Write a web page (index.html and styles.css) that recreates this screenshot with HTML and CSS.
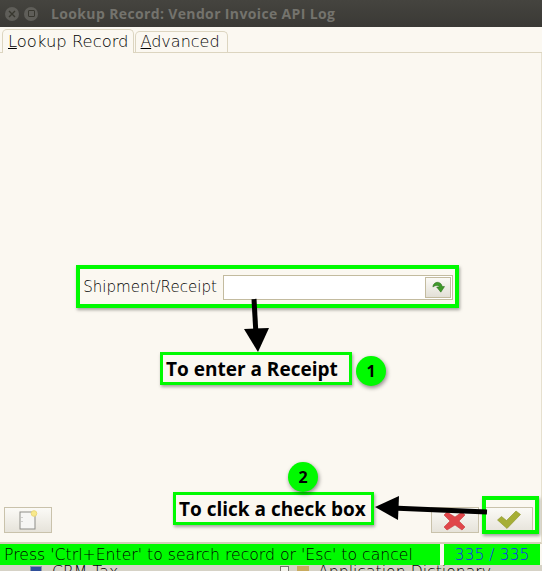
FILE: index.html
```html
<!doctype html>
<html lang="en">
    <head>
        <meta charset="UTF-8" />
        <title>Lookup Record: Vendor Invoice API Log</title>
        <link rel="stylesheet" href="styles.css">
    </head>

    <body>
        <div class="titlebar">
            <span class="win-btn">
                <svg width="8" height="8" viewBox="0 0 8 8"><path d="M1 1l6 6M7 1L1 7" stroke="#38372f" stroke-width="1.4" /></svg>
            </span>
            <span class="win-btn"><span class="win-square"></span></span>
            <span class="win-title">Lookup Record: Vendor Invoice API Log</span>
        </div>

        <div class="tabs">
            <div class="tab tab-active"><u>L</u>ookup Record</div>
            <div class="tab"><u>A</u>dvanced</div>
        </div>

        <div class="panel">
            <div class="form-area">
                <div class="form-row">
                    <label class="field-label" for="receipt">Shipment/Receipt</label>
                    <div class="field">
                        <input type="text" id="receipt" />
                        <button class="field-btn">
                            <svg width="13" height="13" viewBox="0 0 14 14">
                                <path d="M1 6.500C1 3 4 1 7 1.500c2 .4 3.500 2 4 4.500H13.500L9.500 12 5 6.500h3C7.500 4.500 4 4 1 6.500z" fill="#3f9a2b" stroke="#2c6f1c" stroke-width=".6" />
                            </svg>
                        </button>
                    </div>
                </div>
            </div>

            <div class="actions">
                <button class="btn btn-new">
                    <svg width="20" height="20" viewBox="0 0 20 20">
                        <rect x="2" y="2" width="15" height="17" fill="#f6f6f4" stroke="#8d8d88" />
                        <path d="M4 7v.8M4 11v.8" stroke="#9a9a96" />
                        <circle cx="16" cy="3.500" r="2.800" fill="#f8e98c" stroke="#ecd978" />
                    </svg>
                </button>
                <div class="actions-right">
                    <button class="btn">
                        <svg width="26" height="22" viewBox="0 0 26 22">
                            <path d="M5 3l8 5 7-5 3 3-6 6 6 6-3 3-7-5-8 5-3-3 6-6-6-6z" fill="#e0464a" stroke="#c53a3c" stroke-width=".6" />
                        </svg>
                    </button>
                    <button class="btn">
                        <svg width="26" height="22" viewBox="0 0 26 22">
                            <path d="M1.500 11l4-3.500 5 4L20 2l4.500 3.500L11 19.500z" fill="#a6ae35" stroke="#8b9329" stroke-width=".6" />
                        </svg>
                    </button>
                </div>
            </div>

            <div class="mark mark-form"></div>
            <div class="mark mark-ok"></div>
            <div class="note note-receipt">To enter a Receipt</div>
            <div class="note note-check">To click a check box</div>
            <div class="step step-one">1</div>
            <div class="step step-two">2</div>

            <svg class="arrow arrow-down" width="30" height="60" viewBox="0 0 30 60">
                <path d="M12 2l2 36" stroke="#000" stroke-width="5" fill="none" />
                <path d="M2 32l25 -1-11 24z" fill="#000" />
            </svg>
            <svg class="arrow arrow-left" width="116" height="30" viewBox="0 0 116 30">
                <path d="M18 13l95 4" stroke="#000" stroke-width="5" fill="none" />
                <path d="M1 12l24-11-1 24z" fill="#000" />
            </svg>
        </div>

        <div class="statusbar">
            <div class="status-msg">Press 'Ctrl+Enter' to search record or 'Esc' to cancel</div>
            <div class="status-count">335 / 335</div>
        </div>

        <div class="behind">
            <span class="tree-check"></span>
            <span class="behind-left">CRM Tax</span>
            <span class="tree-plus"></span>
            <span class="tree-folder"></span>
            <span class="behind-right">Application Dictionary</span>
        </div>
    </body>
</html>
```

FILE: styles.css
```css
* {
    box-sizing: border-box;
    margin: 0;
    padding: 0;
}

html,
body {
    height: 100%;
    overflow: hidden;
}

body {
    display: flex;
    flex-direction: column;
    background: #fbf8f1;
    color: #000;
    font-family: "DejaVu Sans", sans-serif;
    font-weight: 200;
}

.titlebar {
    display: flex;
    align-items: center;
    flex: none;
    height: 27px;
    padding-left: 5px;
    gap: 5px;
    background: linear-gradient(#45443f, #3a3935);
}

.win-btn {
    display: flex;
    align-items: center;
    justify-content: center;
    width: 14px;
    height: 14px;
    border-radius: 50%;
    background: #5f5e59;
}

.win-square {
    width: 7px;
    height: 7px;
    border: 1px solid #38372f;
    border-radius: 1px;
}

.win-title {
    margin-left: 8px;
    color: #74736d;
    font-family: "Open Sans", sans-serif;
    font-size: 14px;
    font-weight: 700;
    letter-spacing: 0.36px;
}

.tabs {
    display: flex;
    flex: none;
    align-items: flex-end;
    height: 26px;
    padding-left: 2px;
    border-bottom: 1px solid #dcd5c0;
}

.tab {
    height: 21px;
    margin-left: 1px;
    padding: 0 7px 0 5px;
    border: 1px solid #dcd5c0;
    border-bottom: none;
    border-radius: 5px 5px 0 0;
    font-size: 16px;
    line-height: 20px;
}

.tab-active {
    height: 24px;
    margin-left: 0;
    margin-bottom: -1px;
    padding: 0 4px 0 5px;
    line-height: 23px;
    font-size: 16.400px;
    background: #fbf8f1;
}

.panel {
    position: relative;
    display: flex;
    flex-direction: column;
    flex: 1;
    min-height: 0;
    border-bottom: 2px solid #d6cfba;
    border-right: 1px solid #e6e0cf;
}

.form-area {
    display: flex;
    flex: 1;
    align-items: center;
    justify-content: flex-end;
    padding: 14px 88px 0 0;
}

.form-row {
    display: flex;
    align-items: center;
    gap: 6px;
}

.field-label {
    font-size: 15.100px;
}

.field {
    display: flex;
    align-items: center;
    width: 230px;
    height: 25px;
    padding-right: 1px;
    background: white;
    border: 1px solid #c3bb9f;
}

.field input {
    flex: 1;
    min-width: 0;
    height: 100%;
    border: none;
    background: transparent;
}

.field-btn {
    display: flex;
    align-items: center;
    justify-content: center;
    width: 26px;
    height: 21px;
    border: 1px solid #c3bb9f;
    background: linear-gradient(#fbfaf6, #e2dfd6);
}

.actions {
    display: flex;
    flex: none;
    justify-content: space-between;
    padding: 0 8px 9px 4px;
}

.actions-right {
    display: flex;
    gap: 6px;
}

.btn {
    display: flex;
    align-items: center;
    justify-content: center;
    width: 48px;
    height: 26px;
    border: 1px solid #c9c2ab;
    background: linear-gradient(#fbfaf6, #e6e3da);
}

.mark,
.note {
    position: absolute;
    border: 3px solid #00fa00;
    box-shadow: 1px 2px 3px rgba(0, 0, 0, 0.35);
}

.mark-form {
    left: 76px;
    top: 212px;
    width: 383px;
    height: 43px;
    border-width: 4px;
}

.mark-ok {
    left: 482px;
    top: 443px;
    width: 57px;
    height: 38px;
    border-width: 4px;
}

.note {
    display: flex;
    align-items: center;
    height: 33px;
    padding: 1px 0 0 3px;
    background: #fbf8f1;
    color: #000;
    font-family: "Open Sans", sans-serif;
    font-size: 19px;
    font-weight: 700;
    white-space: nowrap;
}

.note-receipt {
    left: 160px;
    top: 299px;
    width: 192px;
}

.note-check {
    left: 173px;
    top: 439px;
    width: 201px;
}

.step {
    position: absolute;
    width: 30px;
    height: 30px;
    border-radius: 50%;
    background: #00fa00;
    box-shadow: 1px 2px 4px rgba(0, 0, 0, 0.45);
    color: #000;
    font-family: "Open Sans", sans-serif;
    font-size: 16px;
    font-weight: 700;
    line-height: 30px;
    text-align: center;
}

.step-one {
    left: 356px;
    top: 303px;
}

.step-two {
    left: 288px;
    top: 409px;
}

.arrow {
    position: absolute;
}

.arrow-down {
    left: 242px;
    top: 244px;
}

.arrow-left {
    left: 374px;
    top: 442px;
}

.statusbar {
    display: flex;
    flex: none;
    gap: 4px;
    height: 21px;
    padding-right: 2px;
    font-size: 15.700px;
    line-height: 21px;
}

.status-msg {
    width: 440px;
    padding-left: 4px;
    background: #00fa00;
    white-space: nowrap;
}

.status-count {
    flex: 1;
    text-align: center;
    background: #00fa00;
    color: #1a1aff;
}

.behind {
    position: relative;
    flex: none;
    height: 6px;
    overflow: hidden;
    background: #d6d2c6;
    font-size: 15.700px;
}

.behind-left,
.behind-right {
    position: absolute;
    top: 0;
    line-height: 14px;
    white-space: nowrap;
}

.behind-left {
    left: 52px;
}

.behind-right {
    left: 318px;
}

.tree-check,
.tree-plus,
.tree-folder {
    position: absolute;
    top: 1px;
}

.tree-check {
    left: 30px;
    width: 12px;
    height: 8px;
    border: 1px solid #8b93a8;
    background: #2f4f9a;
}

.tree-plus {
    left: 280px;
    width: 9px;
    height: 8px;
    border: 1px solid #77756c;
    background: #f4f2ea;
}

.tree-folder {
    left: 297px;
    width: 12px;
    height: 8px;
    background: #c9ab5e;
}
```
